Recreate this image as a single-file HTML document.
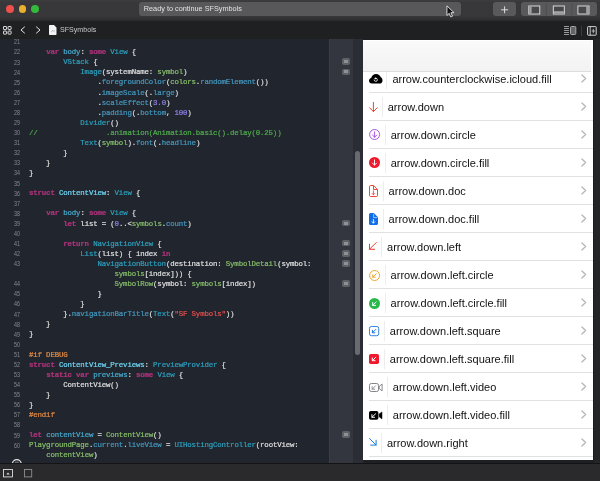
<!DOCTYPE html>
<html><head><meta charset="utf-8"><title>SFSymbols</title>
<style>
html,body{margin:0;padding:0;background:#1e1f22;overflow:hidden}
#w{position:relative;width:600px;height:481px;overflow:hidden;background:#1f2023;font-family:"Liberation Sans",sans-serif}
#tb{position:absolute;left:0;top:0;width:600px;height:21px;background:linear-gradient(#3d3d3f 0,#38383a 12%,#37373a 78%,#323234 90%,#28282a 100%)}
.tl{position:absolute;top:5.200px;width:7.800px;height:7.800px;border-radius:50%}
#act{will-change:transform;position:absolute;left:139px;top:2px;width:322px;height:14px;border-radius:3px;background:#58585b;color:#e2e2e2;font-size:7.300px;line-height:14.600px;text-indent:4.800px;white-space:nowrap}
.btn{position:absolute;top:2px;height:14px;border-radius:3px;background:#59595c}
.btn svg{position:absolute;left:0;top:.500px}
#jb{position:absolute;left:0;top:21px;width:600px;height:18px;background:#1f2022}
#jbt{will-change:transform;position:absolute;left:60.300px;top:0;font-size:7.100px;line-height:18px;color:#c9c9cb;white-space:nowrap}
#ed{position:absolute;left:0;top:39px;width:329px;height:424px;background:#21252d;overflow:hidden}
#edi{will-change:transform;position:absolute;left:0;top:-39px;width:329px;height:481px}
.ln{position:absolute;left:0;width:19.900px;transform:scaleX(.84);transform-origin:100% 50%;text-align:right;font-size:6.400px;line-height:10px;height:10px;color:#888a92;white-space:pre}
.cl{position:absolute;left:29px;font-family:"Liberation Mono",monospace;font-size:7.400px;letter-spacing:-0.157px;line-height:10px;height:10px;color:#dfdfe0;white-space:pre;-webkit-text-stroke:.22px}
.k{color:#ad337b}
.t{color:#2c9fbd}
.f{color:#4496bc}
.g{color:#86bd6a}
.n{color:#8f80e6}
.s{color:#e0504f}
.c{color:#4fab4c}
.m{color:#e08a45}
.d{color:#46a8cc}
.D{color:#6fd6f5}

.k{font-weight:bold}
#sb{position:absolute;left:329px;top:39px;width:23.500px;height:424px;background:#33363e;border-left:1px solid #3b3d45;box-sizing:border-box}
#sc{position:absolute;left:352.500px;top:39px;width:10.500px;height:424px;background:#2b2d35}
#th{position:absolute;left:355.300px;top:151px;width:5px;height:204px;border-radius:2.500px;background:#696a70}
.ri{position:absolute;left:341.700px;width:8.400px;height:6.600px;border-radius:1.800px;background:#606166}
.ri:after{content:"";position:absolute;left:2.300px;top:1.800px;width:3.800px;height:3px;background:#909196}
#lv{position:absolute;left:363px;top:39.500px;width:229.500px;height:420.500px;background:#fff;overflow:hidden}
#lvi{will-change:transform;position:absolute;left:-363px;top:-39.500px;width:600px;height:481px}
#nav{position:absolute;left:363px;top:41px;width:228px;height:29.800px;background:linear-gradient(#fafafa,#f6f6f6 50%,#f2f2f2);border-bottom:1px solid #dddddf}
.row{position:absolute;left:363px;width:230px;height:28px}
.row:after{content:"";position:absolute;left:6px;right:0;bottom:-.5px;height:1px;background:#e1e1e3}
.ic{position:absolute;left:6px;display:block;overflow:visible}
.vd{position:absolute;top:4.500px;height:19.500px;width:1px;background:#ededef}
.tx{position:absolute;top:1px;line-height:27.500px;font-size:11px;color:#111;white-space:nowrap;letter-spacing:.010px}
.chev{position:absolute;left:217.900px;top:9.500px}
#re{position:absolute;left:592.500px;top:39px;width:7.500px;height:424px;background:#242527;border-left:1.500px solid #1b1c1f;box-sizing:border-box}
#bb{position:absolute;left:0;top:463.300px;width:600px;height:18px;background:#2a2a2d;border-top:.6px solid #141416}
</style></head><body>
<div id="w">
 <div id="tb">
  <div class="tl" style="left:6px;background:#f0504c"></div>
  <div class="tl" style="left:18.500px;background:#e8b02c"></div>
  <div class="tl" style="left:31px;background:#35b93c"></div>
  <div id="act">Ready to continue SFSymbols</div>
  <div class="btn" style="left:493px;width:23.200px"><svg width="23.200" height="13.500" viewBox="0 0 23.200 13.500" style="display:block"><path d="M11.600 3.300v7M8.100 6.800h7" stroke="#e6e6e6" stroke-width=".9" fill="none"/></svg></div>
  <div class="btn" style="left:521.200px;width:75.500px"><svg width="75.500" height="13.500" viewBox="0 0 75.500 13.500" style="display:block">
   <path d="M25.300 0v13.500M50.800 0v13.500" stroke="#4a4a4d" stroke-width=".7"/>
   <g fill="#48484b" stroke="#e6e6e6" stroke-width=".9"><rect x="7.800" y="3" width="11" height="8"/><rect x="32.300" y="3" width="11" height="8"/><rect x="56.900" y="3" width="11.100" height="8"/></g>
   <rect x="8.300" y="3.500" width="2.300" height="7" fill="#a4a4a6"/><rect x="32.800" y="8.200" width="10" height="2.300" fill="#a4a4a6"/><rect x="65.200" y="3.500" width="2.300" height="7" fill="#a4a4a6"/>
  </svg></div>
  <svg style="position:absolute;left:446.300px;top:5.100px" width="10.200" height="13.200" viewBox="0 0 11 14"><path d="M1 .8v10.400l2.500-2.300 1.700 3.900 1.800-.8-1.700-3.800h3.400z" fill="#111" stroke="#f4f4f4" stroke-width=".9" stroke-linejoin="round"/></svg>
 </div>
 <div id="jb">
  <svg style="position:absolute;left:3px;top:4.800px" width="9" height="9" viewBox="0 0 9 9"><g fill="none" stroke="#d8d8d8" stroke-width="1"><rect x=".5" y=".5" width="3" height="3" rx=".3"/><rect x="5.100" y=".5" width="3" height="3" rx=".3"/><rect x=".5" y="5.100" width="3" height="3" rx=".3"/><rect x="5.100" y="5.100" width="3" height="3" rx=".3"/></g><path d="M3.500 2h1.600M3.500 6.600h1.600M2 3.500v1.600M6.600 3.500v1.600" stroke="#9a9a9a" stroke-width=".7"/></svg>
  <svg style="position:absolute;left:19.900px;top:5.200px" width="6" height="8" viewBox="0 0 6 8"><path d="M4.800 .7L1 4l3.800 3.300" fill="none" stroke="#e4e4e4" stroke-width="1"/></svg>
  <svg style="position:absolute;left:35px;top:5.200px" width="6" height="8" viewBox="0 0 6 8"><path d="M1.200 .7L5 4 1.200 7.300" fill="none" stroke="#e4e4e4" stroke-width="1"/></svg>
  <svg style="position:absolute;left:48.800px;top:4.300px" width="8" height="10" viewBox="0 0 8 10"><path d="M.8 0h4.200l2.500 2.500v6.700a.8 .8 0 0 1-.8 .8H.8a.8 .8 0 0 1-.8-.8V.8A.8 .8 0 0 1 .8 0z" fill="#f2f2f2"/><path d="M2.500 6.800l1.200-1.500 1 1 1-.5" stroke="#888" stroke-width=".6" fill="none"/></svg>
  <div id="jbt">SFSymbols</div>
  <svg style="position:absolute;left:564px;top:5px" width="13" height="10" viewBox="0 0 13 10"><path d="M0 .5h5M0 2.500h5M0 4.500h5M0 6.500h5M0 8.500h5" stroke="#9a9a9c" stroke-width="1"/><rect x="6.500" y=".5" width="5.300" height="8" rx="1" fill="#646467" stroke="#a8a8aa" stroke-width="1"/></svg>
  <div style="position:absolute;left:581px;top:4.500px;width:.7px;height:10px;background:#3c3c3f"></div>
  <svg style="position:absolute;left:586.500px;top:4.800px" width="10" height="10" viewBox="0 0 10 10"><rect x=".6" y=".6" width="8.600" height="8.600" rx=".6" fill="none" stroke="#d4d4d6" stroke-width="1"/><path d="M3.200 .6v8.600" stroke="#d4d4d6" stroke-width=".9"/><path d="M6.300 2.800v4.400M4.700 5h3.200" stroke="#d4d4d6" stroke-width=".8"/></svg>
 </div>
 <div id="ed"><div id="edi">
<div class="ln" style="top:37.40px">21</div>
<div class="ln" style="top:47.48px">22</div>
<div class="ln" style="top:57.56px">23</div>
<div class="ln" style="top:67.64px">24</div>
<div class="ln" style="top:77.72px">25</div>
<div class="ln" style="top:87.80px">26</div>
<div class="ln" style="top:97.88px">27</div>
<div class="ln" style="top:107.96px">28</div>
<div class="ln" style="top:118.04px">29</div>
<div class="ln" style="top:128.12px">30</div>
<div class="ln" style="top:138.20px">31</div>
<div class="ln" style="top:148.28px">32</div>
<div class="ln" style="top:158.36px">33</div>
<div class="ln" style="top:168.44px">34</div>
<div class="ln" style="top:178.52px">35</div>
<div class="ln" style="top:188.60px">36</div>
<div class="ln" style="top:198.68px">37</div>
<div class="ln" style="top:208.76px">38</div>
<div class="ln" style="top:218.84px">39</div>
<div class="ln" style="top:228.92px">40</div>
<div class="ln" style="top:239.00px">41</div>
<div class="ln" style="top:249.08px">42</div>
<div class="ln" style="top:259.16px">43</div>
<div class="ln" style="top:279.32px">44</div>
<div class="ln" style="top:289.40px">45</div>
<div class="ln" style="top:299.48px">46</div>
<div class="ln" style="top:309.56px">47</div>
<div class="ln" style="top:319.64px">48</div>
<div class="ln" style="top:329.72px">49</div>
<div class="ln" style="top:339.80px">50</div>
<div class="ln" style="top:349.88px">51</div>
<div class="ln" style="top:359.96px">52</div>
<div class="ln" style="top:370.04px">53</div>
<div class="ln" style="top:380.12px">54</div>
<div class="ln" style="top:390.20px">55</div>
<div class="ln" style="top:400.28px">56</div>
<div class="ln" style="top:410.36px">57</div>
<div class="ln" style="top:420.44px">58</div>
<div class="ln" style="top:430.52px">59</div>
<div class="ln" style="top:440.60px">60</div>
<div class="cl" style="top:47.18px">    <span class="k">var</span> <span class="d">body</span>: <span class="k">some</span> <span class="t">View</span> {</div>
<div class="cl" style="top:57.26px">        <span class="t">VStack</span> {</div>
<div class="cl" style="top:67.34px">            <span class="t">Image</span>(systemName: <span class="g">symbol</span>)</div>
<div class="cl" style="top:77.42px">                .<span class="f">foregroundColor</span>(<span class="g">colors</span>.<span class="f">randomElement</span>())</div>
<div class="cl" style="top:87.50px">                .<span class="f">imageScale</span>(.<span class="f">large</span>)</div>
<div class="cl" style="top:97.58px">                .<span class="f">scaleEffect</span>(<span class="n">3.0</span>)</div>
<div class="cl" style="top:107.66px">                .<span class="f">padding</span>(.<span class="f">bottom</span>, <span class="n">100</span>)</div>
<div class="cl" style="top:117.74px">            <span class="t">Divider</span>()</div>
<div class="cl" style="top:127.82px"><span class="c">//                .animation(Animation.basic().delay(0.25))</span></div>
<div class="cl" style="top:137.90px">            <span class="t">Text</span>(<span class="g">symbol</span>).<span class="f">font</span>(.<span class="f">headline</span>)</div>
<div class="cl" style="top:147.98px">        }</div>
<div class="cl" style="top:158.06px">    }</div>
<div class="cl" style="top:168.14px">}</div>
<div class="cl" style="top:188.30px"><span class="k">struct</span> <span class="D">ContentView</span>: <span class="t">View</span> {</div>
<div class="cl" style="top:208.46px">    <span class="k">var</span> <span class="d">body</span>: <span class="k">some</span> <span class="t">View</span> {</div>
<div class="cl" style="top:218.54px">        <span class="k">let</span> list = (<span class="n">0</span>..&lt;<span class="g">symbols</span>.<span class="f">count</span>)</div>
<div class="cl" style="top:238.70px">        <span class="k">return</span> <span class="t">NavigationView</span> {</div>
<div class="cl" style="top:248.78px">            <span class="t">List</span>(list) { index <span class="k">in</span></div>
<div class="cl" style="top:258.86px">                <span class="t">NavigationButton</span>(destination: <span class="g">SymbolDetail</span>(symbol:</div>
<div class="cl" style="top:268.94px">                    <span class="g">symbols</span>[index])) {</div>
<div class="cl" style="top:279.02px">                    <span class="g">SymbolRow</span>(symbol: <span class="g">symbols</span>[index])</div>
<div class="cl" style="top:289.10px">                }</div>
<div class="cl" style="top:299.18px">            }</div>
<div class="cl" style="top:309.26px">        }.<span class="f">navigationBarTitle</span>(<span class="t">Text</span>(<span class="s">&quot;SF Symbols&quot;</span>))</div>
<div class="cl" style="top:319.34px">    }</div>
<div class="cl" style="top:329.42px">}</div>
<div class="cl" style="top:349.58px"><span class="m">#if DEBUG</span></div>
<div class="cl" style="top:359.66px"><span class="k">struct</span> <span class="D">ContentView_Previews</span>: <span class="t">PreviewProvider</span> {</div>
<div class="cl" style="top:369.74px">    <span class="k">static</span> <span class="k">var</span> <span class="d">previews</span>: <span class="k">some</span> <span class="t">View</span> {</div>
<div class="cl" style="top:379.82px">        ContentView()</div>
<div class="cl" style="top:389.90px">    }</div>
<div class="cl" style="top:399.98px">}</div>
<div class="cl" style="top:410.06px"><span class="m">#endif</span></div>
<div class="cl" style="top:430.22px"><span class="k">let</span> <span class="d">contentView</span> = <span class="g">ContentView</span>()</div>
<div class="cl" style="top:440.30px"><span class="g">PlaygroundPage</span>.<span class="f">current</span>.<span class="f">liveView</span> = <span class="t">UIHostingController</span>(rootView:</div>
<div class="cl" style="top:450.38px">    <span class="g">contentView</span>)</div>
 </div></div>
 <div id="sb"></div><div id="sc"></div><div id="th"></div>
<div class="ri" style="top:58.46px"></div>
<div class="ri" style="top:68.54px"></div>
<div class="ri" style="top:219.74px"></div>
<div class="ri" style="top:239.90px"></div>
<div class="ri" style="top:249.98px"></div>
<div class="ri" style="top:260.06px"></div>
<div class="ri" style="top:280.22px"></div>
<div class="ri" style="top:431.42px"></div>
 <div id="lv"><div id="lvi">
<div class="row" style="top:64.50px">
<svg class="ic" style="top:9.30px" width="13.5" height="9.6" viewBox="0 0 13.5 9.6"><path d="M2.900 9.600C1.200 9.600 0 8.400 0 6.800C0 5.400 .9 4.300 2.200 4C2.500 1.700 4.600 0 7.100 0C9.300 0 11.100 1.300 11.800 3.200C13 3.700 13.500 5 13.500 6.400C13.500 8.200 12.300 9.600 10.600 9.600z" fill="#000"/><circle cx="6.800" cy="5.800" r="1.600" fill="none" stroke="#fff" stroke-width=".8"/><path d="M6 3.400l1.800 .8-1.600 1.200z" fill="#fff"/><path d="M4.800 5l1 1" stroke="#000" stroke-width=".7"/></svg><div class="vd" style="left:23.3px"></div><div class="tx" style="left:29.4px">arrow.counterclockwise.icloud.fill</div>
<svg class="chev" width="6" height="9" viewBox="0 0 6 9"><path d="M.9 1l3.700 3.500L.9 8" fill="none" stroke="#b2b2b8" stroke-width="1.200" stroke-linecap="round" stroke-linejoin="round"/></svg>
</div>
<div class="row" style="top:92.50px">
<svg class="ic" style="top:9.30px" width="8.8" height="10.2" viewBox="0 0 8.8 10.2"><path d="M4.400 .5V9.600M.6 5.800L4.400 9.600L8.200 5.800" fill="none" stroke="#e8402f" stroke-width="1" stroke-linecap="round" stroke-linejoin="round"/></svg><div class="vd" style="left:18.6px"></div><div class="tx" style="left:24.7px">arrow.down</div>
<svg class="chev" width="6" height="9" viewBox="0 0 6 9"><path d="M.9 1l3.700 3.500L.9 8" fill="none" stroke="#b2b2b8" stroke-width="1.200" stroke-linecap="round" stroke-linejoin="round"/></svg>
</div>
<div class="row" style="top:120.50px">
<svg class="ic" style="top:8.90px" width="11.2" height="11" viewBox="0 0 11.2 11"><circle cx="5.600" cy="5.500" r="5" fill="none" stroke="#a44ce0" stroke-width=".95"/><path d="M5.600 2.900V8.200M3.500 6.100L5.600 8.200L7.700 6.100" fill="none" stroke="#a44ce0" stroke-width=".95" stroke-linecap="round" stroke-linejoin="round"/></svg><div class="vd" style="left:21.6px"></div><div class="tx" style="left:27.7px">arrow.down.circle</div>
<svg class="chev" width="6" height="9" viewBox="0 0 6 9"><path d="M.9 1l3.700 3.500L.9 8" fill="none" stroke="#b2b2b8" stroke-width="1.200" stroke-linecap="round" stroke-linejoin="round"/></svg>
</div>
<div class="row" style="top:148.50px">
<svg class="ic" style="top:8.70px" width="11" height="11" viewBox="0 0 11 11"><circle cx="5.500" cy="5.500" r="5.500" fill="#f0182c"/><path d="M5.500 2.900V8.100M3.500 6.100L5.500 8.100L7.500 6.100" fill="none" stroke="#fff" stroke-width=".95" stroke-linecap="round" stroke-linejoin="round"/></svg><div class="vd" style="left:21.6px"></div><div class="tx" style="left:27.7px">arrow.down.circle.fill</div>
<svg class="chev" width="6" height="9" viewBox="0 0 6 9"><path d="M.9 1l3.700 3.500L.9 8" fill="none" stroke="#b2b2b8" stroke-width="1.200" stroke-linecap="round" stroke-linejoin="round"/></svg>
</div>
<div class="row" style="top:176.50px">
<svg class="ic" style="top:8.30px" width="9" height="12" viewBox="0 0 9 12"><path d="M1.700 .5H4.600L8.500 4.400V10.300A1.200 1.200 0 0 1 7.300 11.500H1.700A1.200 1.200 0 0 1 .5 10.300V1.700A1.200 1.200 0 0 1 1.700 .5zM4.500 .7V4.500H8.300" fill="none" stroke="#e8402f" stroke-width=".95" stroke-linejoin="round"/><path d="M4.400 5.800V9.800M3.100 8.500L4.400 9.800L5.700 8.500" fill="none" stroke="#e8402f" stroke-width=".85" stroke-linecap="round" stroke-linejoin="round"/></svg><div class="vd" style="left:19.5px"></div><div class="tx" style="left:25.6px">arrow.down.doc</div>
<svg class="chev" width="6" height="9" viewBox="0 0 6 9"><path d="M.9 1l3.700 3.500L.9 8" fill="none" stroke="#b2b2b8" stroke-width="1.200" stroke-linecap="round" stroke-linejoin="round"/></svg>
</div>
<div class="row" style="top:204.50px">
<svg class="ic" style="top:8.30px" width="9" height="12" viewBox="0 0 9 12"><path d="M1.600 0H4.800L9 4.200V10.400A1.600 1.600 0 0 1 7.400 12H1.600A1.600 1.600 0 0 1 0 10.400V1.600A1.600 1.600 0 0 1 1.600 0z" fill="#0f6fe8"/><path d="M4.600 .8V4.600H8.400" fill="none" stroke="#cfe2ff" stroke-width=".7"/><path d="M4.400 6.400V10M3 8.700L4.400 10.100L5.800 8.700" fill="none" stroke="#fff" stroke-width=".85" stroke-linecap="round" stroke-linejoin="round"/></svg><div class="vd" style="left:19.5px"></div><div class="tx" style="left:25.6px">arrow.down.doc.fill</div>
<svg class="chev" width="6" height="9" viewBox="0 0 6 9"><path d="M.9 1l3.700 3.500L.9 8" fill="none" stroke="#b2b2b8" stroke-width="1.200" stroke-linecap="round" stroke-linejoin="round"/></svg>
</div>
<div class="row" style="top:232.50px">
<svg class="ic" style="top:9.50px" width="7.8" height="7.8" viewBox="0 0 7.8 7.8"><path d="M7.300 .5L.5 7.300M.5 2.200V7.300H5.600" fill="none" stroke="#e8402f" stroke-width="1" stroke-linecap="round" stroke-linejoin="round"/></svg><div class="vd" style="left:17.9px"></div><div class="tx" style="left:24.0px">arrow.down.left</div>
<svg class="chev" width="6" height="9" viewBox="0 0 6 9"><path d="M.9 1l3.700 3.500L.9 8" fill="none" stroke="#b2b2b8" stroke-width="1.200" stroke-linecap="round" stroke-linejoin="round"/></svg>
</div>
<div class="row" style="top:260.50px">
<svg class="ic" style="top:9.10px" width="11.2" height="11" viewBox="0 0 11.2 11"><circle cx="5.600" cy="5.500" r="5" fill="none" stroke="#f0a020" stroke-width=".95"/><path d="M7.200 3.800L3.800 7.200M3.800 4.700V7.200H6.300" fill="none" stroke="#f0a020" stroke-width=".95" stroke-linecap="round" stroke-linejoin="round"/></svg><div class="vd" style="left:21.5px"></div><div class="tx" style="left:27.6px">arrow.down.left.circle</div>
<svg class="chev" width="6" height="9" viewBox="0 0 6 9"><path d="M.9 1l3.700 3.500L.9 8" fill="none" stroke="#b2b2b8" stroke-width="1.200" stroke-linecap="round" stroke-linejoin="round"/></svg>
</div>
<div class="row" style="top:288.50px">
<svg class="ic" style="top:9.10px" width="11" height="11" viewBox="0 0 11 11"><circle cx="5.500" cy="5.500" r="5.500" fill="#28b84a"/><path d="M7.200 3.900L3.700 7.400M3.700 4.500V7.400H6.600" fill="none" stroke="#fff" stroke-width="1" stroke-linecap="round" stroke-linejoin="round"/></svg><div class="vd" style="left:21.5px"></div><div class="tx" style="left:27.6px">arrow.down.left.circle.fill</div>
<svg class="chev" width="6" height="9" viewBox="0 0 6 9"><path d="M.9 1l3.700 3.500L.9 8" fill="none" stroke="#b2b2b8" stroke-width="1.200" stroke-linecap="round" stroke-linejoin="round"/></svg>
</div>
<div class="row" style="top:316.50px">
<svg class="ic" style="top:9.30px" width="10.2" height="10.2" viewBox="0 0 10.2 10.2"><rect x=".5" y=".5" width="9.200" height="9.200" rx="1.800" fill="none" stroke="#2a7fd8" stroke-width=".95"/><path d="M6.800 3.400L3.400 6.800M3.400 4.300V6.800H5.900" fill="none" stroke="#0f6fe8" stroke-width=".95" stroke-linecap="round" stroke-linejoin="round"/></svg><div class="vd" style="left:20.7px"></div><div class="tx" style="left:26.8px">arrow.down.left.square</div>
<svg class="chev" width="6" height="9" viewBox="0 0 6 9"><path d="M.9 1l3.700 3.500L.9 8" fill="none" stroke="#b2b2b8" stroke-width="1.200" stroke-linecap="round" stroke-linejoin="round"/></svg>
</div>
<div class="row" style="top:344.50px">
<svg class="ic" style="top:9.50px" width="10" height="10" viewBox="0 0 10 10"><rect x="0" y="0" width="10" height="10" rx="1.800" fill="#f0182c"/><path d="M6.800 3.200L3.300 6.700M3.300 3.900V6.700H6.100" fill="none" stroke="#fff" stroke-width="1" stroke-linecap="round" stroke-linejoin="round"/></svg><div class="vd" style="left:20.7px"></div><div class="tx" style="left:26.8px">arrow.down.left.square.fill</div>
<svg class="chev" width="6" height="9" viewBox="0 0 6 9"><path d="M.9 1l3.700 3.500L.9 8" fill="none" stroke="#b2b2b8" stroke-width="1.200" stroke-linecap="round" stroke-linejoin="round"/></svg>
</div>
<div class="row" style="top:372.50px">
<svg class="ic" style="top:10.10px" width="13.6" height="9" viewBox="0 0 13.6 9"><rect x=".5" y=".5" width="9" height="8" rx="1.800" fill="none" stroke="#7e7e83" stroke-width=".95"/><path d="M10.300 3.300L13.100 1.100V7.900L10.300 5.700z" fill="none" stroke="#7e7e83" stroke-width=".9" stroke-linejoin="round"/><path d="M6.600 2.800L3.200 6.200M3.200 3.700V6.200H5.700" fill="none" stroke="#7e7e83" stroke-width=".85" stroke-linecap="round" stroke-linejoin="round"/></svg><div class="vd" style="left:23.7px"></div><div class="tx" style="left:29.8px">arrow.down.left.video</div>
<svg class="chev" width="6" height="9" viewBox="0 0 6 9"><path d="M.9 1l3.700 3.500L.9 8" fill="none" stroke="#b2b2b8" stroke-width="1.200" stroke-linecap="round" stroke-linejoin="round"/></svg>
</div>
<div class="row" style="top:400.50px">
<svg class="ic" style="top:10.10px" width="13.3" height="8.8" viewBox="0 0 13.3 8.8"><rect x="0" y="0" width="9.400" height="8.800" rx="1.800" fill="#000"/><path d="M10.100 3L13 .9V7.900L10.100 5.800z" fill="#000" stroke="#000" stroke-width=".5" stroke-linejoin="round"/><path d="M6.600 2.800L2.900 6.300M2.900 3.600V6.300H5.600" fill="none" stroke="#fff" stroke-width=".95" stroke-linecap="round" stroke-linejoin="round"/></svg><div class="vd" style="left:23.7px"></div><div class="tx" style="left:29.8px">arrow.down.left.video.fill</div>
<svg class="chev" width="6" height="9" viewBox="0 0 6 9"><path d="M.9 1l3.700 3.500L.9 8" fill="none" stroke="#b2b2b8" stroke-width="1.200" stroke-linecap="round" stroke-linejoin="round"/></svg>
</div>
<div class="row" style="top:428.50px">
<svg class="ic" style="top:9.70px" width="7.6" height="7.6" viewBox="0 0 7.6 7.6"><path d="M.5 .5L7.100 7.100M7.100 2.200V7.100H1.700" fill="none" stroke="#1a7ae0" stroke-width="1" stroke-linecap="round" stroke-linejoin="round"/></svg><div class="vd" style="left:17.8px"></div><div class="tx" style="left:23.9px">arrow.down.right</div>
<svg class="chev" width="6" height="9" viewBox="0 0 6 9"><path d="M.9 1l3.700 3.500L.9 8" fill="none" stroke="#b2b2b8" stroke-width="1.200" stroke-linecap="round" stroke-linejoin="round"/></svg>
</div>
 </div></div>
 <div id="nav"></div>
 <div id="re"></div>
 <svg style="position:absolute;left:11px;top:458.400px" width="12" height="5" viewBox="0 0 12 5"><circle cx="5.800" cy="6" r="4.400" fill="#21252d" stroke="#e4e4e4" stroke-width="1.300"/><path d="M3.800 4.200h4" stroke="#9a9a9e" stroke-width=".8"/></svg>
 <div id="bb">
  <svg style="position:absolute;left:2.800px;top:4.800px" width="11" height="9" viewBox="0 0 11 9"><rect x=".5" y=".5" width="9" height="7.400" fill="none" stroke="#dcdcdc" stroke-width=".9"/><path d="M3.300 5.500l1.700-2.100 1.700 2.100z" fill="#dcdcdc"/></svg>
  <svg style="position:absolute;left:24.200px;top:4.800px" width="9" height="9" viewBox="0 0 9 9"><rect x=".5" y=".5" width="7.200" height="7.400" fill="none" stroke="#8e8e92" stroke-width=".9"/></svg>
 </div>
</div>
</body></html>
